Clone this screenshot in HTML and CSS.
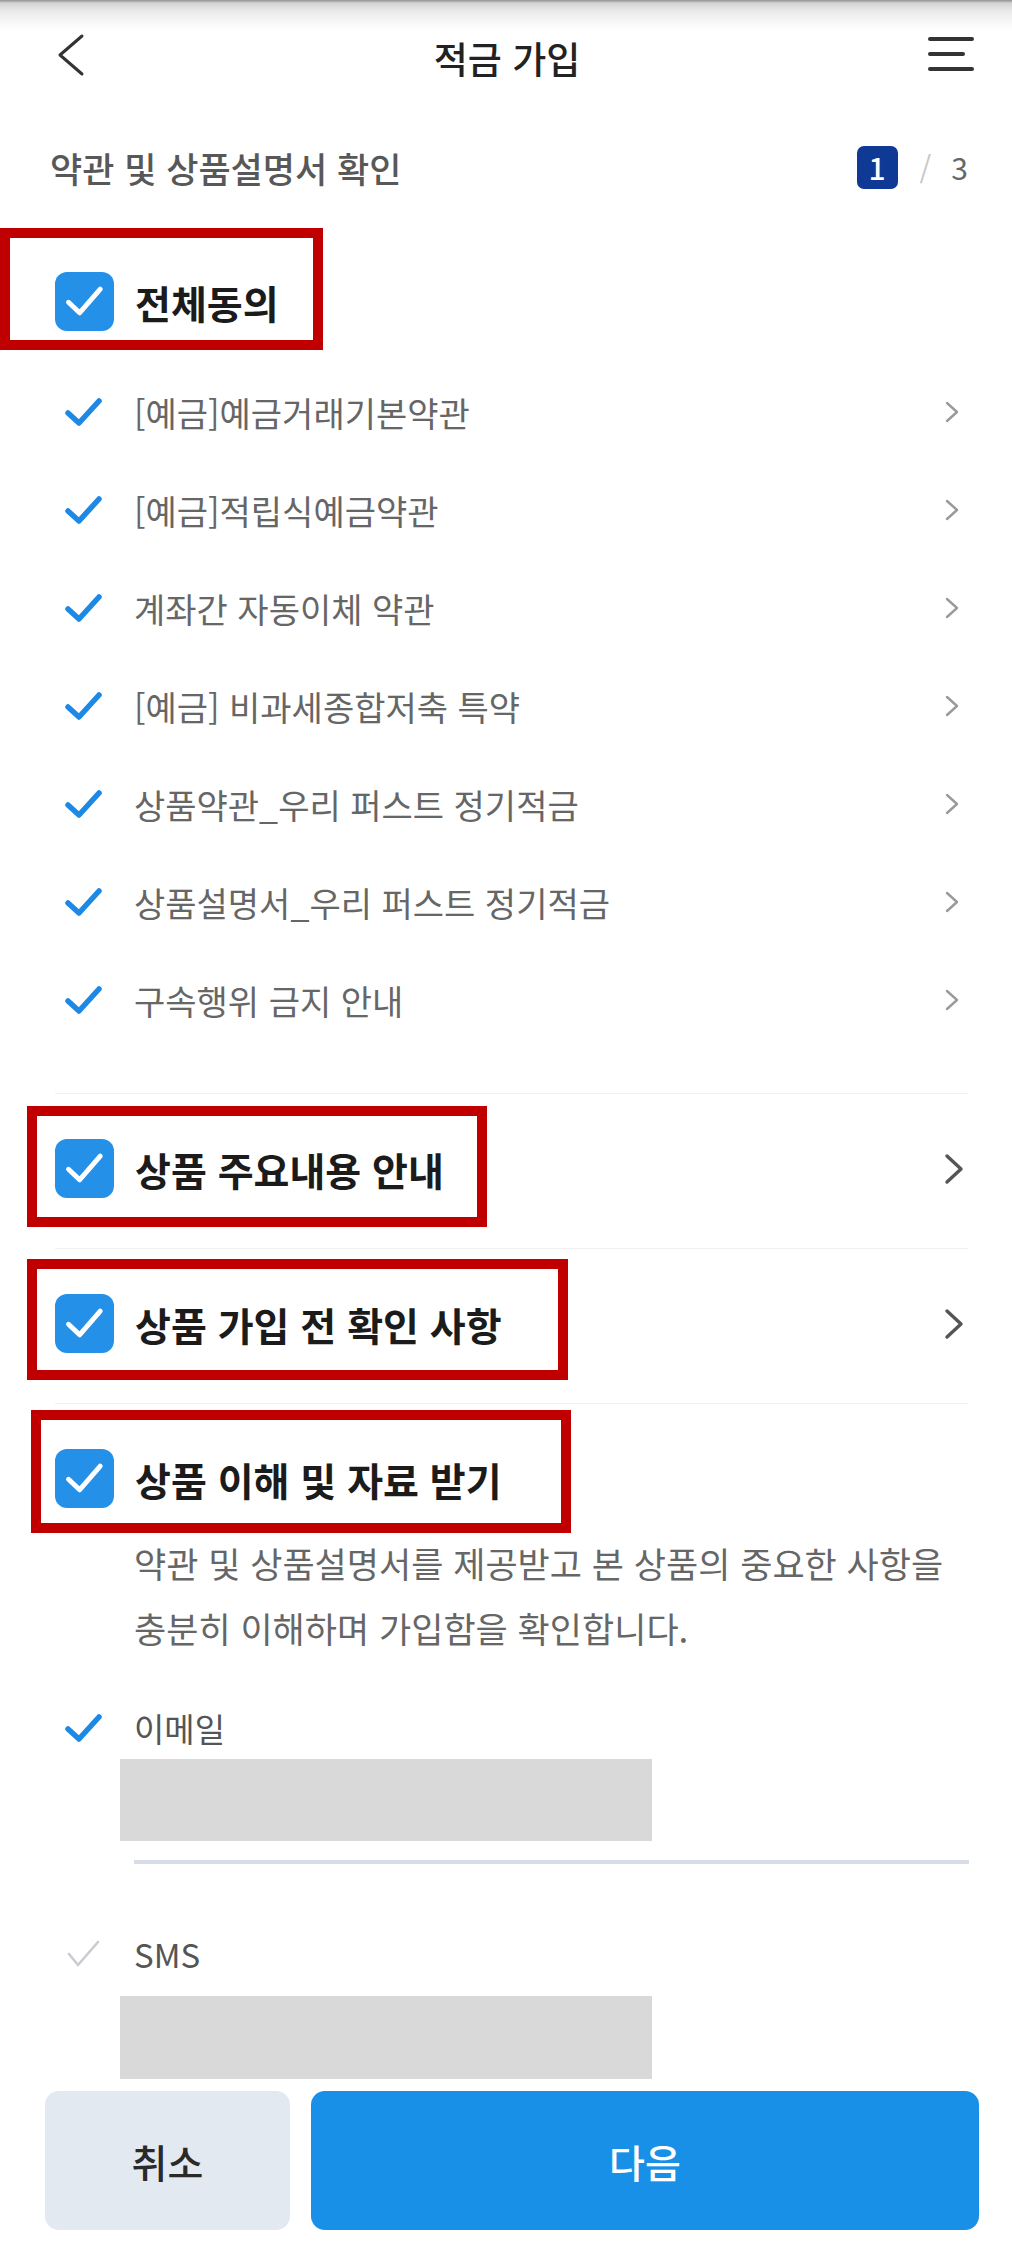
FILE: index.html
```html
<!DOCTYPE html>
<html lang="ko">
<head>
  <meta charset="UTF-8">
  <title>적금 가입</title>
  <meta name="viewport" content="width=device-width, initial-scale=1.0">
  <link rel="stylesheet" href="styles.css">
</head>
<body>
  <div class="top-shade"></div>

  <!-- Header -->
  <header class="app-header">
    <button class="icon-btn back-btn" type="button" title="뒤로">
      <svg viewBox="0 0 30 44" width="30" height="44"><polyline points="26,3 4,22 26,41" fill="none" stroke="#333" stroke-width="3" stroke-linecap="round" stroke-linejoin="round"/></svg>
    </button>
    <h1 class="app-title">적금 가입</h1>
    <button class="icon-btn menu-btn" type="button" title="메뉴">
      <svg viewBox="0 0 46 36" width="46" height="36"><g stroke="#333" stroke-width="4" stroke-linecap="round"><line x1="2" y1="3" x2="44" y2="3"/><line x1="2" y1="18" x2="35" y2="18"/><line x1="2" y1="33" x2="44" y2="33"/></g></svg>
    </button>
  </header>

  <main class="page">
    <div class="step-row">
      <h2 class="step-title">약관 및 상품설명서 확인</h2>
      <div class="step-count">
        <span class="step-now">1</span>
        <span class="step-sep">/</span>
        <span class="step-total">3</span>
      </div>
    </div>

    <!-- 전체동의 -->
    <div class="agree-all">
      <span class="mark-box"><svg viewBox="0 0 24 24"><polyline points="5.5,12.3 10,16.6 18.4,7" fill="none" stroke="#fff" stroke-width="2" stroke-linecap="round" stroke-linejoin="round"/></svg></span>
      <span class="agree-all-label">전체동의</span>
      <span class="callout callout-all"></span>
    </div>

    <ul class="terms">
      <li class="term">
        <svg class="tick" viewBox="0 0 37 30"><polyline points="3,16 14,26 34,4" fill="none" stroke="#1e88e5" stroke-width="5.5" stroke-linecap="round" stroke-linejoin="round"/></svg>
        <span class="term-name">[예금]예금거래기본약관</span>
        <svg class="chev-sm" viewBox="0 0 16 24"><polyline points="3,3 13,12 3,21" fill="none" stroke="#9a9a9a" stroke-width="2.4" stroke-linecap="round" stroke-linejoin="round"/></svg>
      </li>
      <li class="term">
        <svg class="tick" viewBox="0 0 37 30"><polyline points="3,16 14,26 34,4" fill="none" stroke="#1e88e5" stroke-width="5.5" stroke-linecap="round" stroke-linejoin="round"/></svg>
        <span class="term-name">[예금]적립식예금약관</span>
        <svg class="chev-sm" viewBox="0 0 16 24"><polyline points="3,3 13,12 3,21" fill="none" stroke="#9a9a9a" stroke-width="2.4" stroke-linecap="round" stroke-linejoin="round"/></svg>
      </li>
      <li class="term">
        <svg class="tick" viewBox="0 0 37 30"><polyline points="3,16 14,26 34,4" fill="none" stroke="#1e88e5" stroke-width="5.5" stroke-linecap="round" stroke-linejoin="round"/></svg>
        <span class="term-name">계좌간 자동이체 약관</span>
        <svg class="chev-sm" viewBox="0 0 16 24"><polyline points="3,3 13,12 3,21" fill="none" stroke="#9a9a9a" stroke-width="2.4" stroke-linecap="round" stroke-linejoin="round"/></svg>
      </li>
      <li class="term">
        <svg class="tick" viewBox="0 0 37 30"><polyline points="3,16 14,26 34,4" fill="none" stroke="#1e88e5" stroke-width="5.5" stroke-linecap="round" stroke-linejoin="round"/></svg>
        <span class="term-name">[예금] 비과세종합저축 특약</span>
        <svg class="chev-sm" viewBox="0 0 16 24"><polyline points="3,3 13,12 3,21" fill="none" stroke="#9a9a9a" stroke-width="2.4" stroke-linecap="round" stroke-linejoin="round"/></svg>
      </li>
      <li class="term">
        <svg class="tick" viewBox="0 0 37 30"><polyline points="3,16 14,26 34,4" fill="none" stroke="#1e88e5" stroke-width="5.5" stroke-linecap="round" stroke-linejoin="round"/></svg>
        <span class="term-name">상품약관_우리 퍼스트 정기적금</span>
        <svg class="chev-sm" viewBox="0 0 16 24"><polyline points="3,3 13,12 3,21" fill="none" stroke="#9a9a9a" stroke-width="2.4" stroke-linecap="round" stroke-linejoin="round"/></svg>
      </li>
      <li class="term">
        <svg class="tick" viewBox="0 0 37 30"><polyline points="3,16 14,26 34,4" fill="none" stroke="#1e88e5" stroke-width="5.5" stroke-linecap="round" stroke-linejoin="round"/></svg>
        <span class="term-name">상품설명서_우리 퍼스트 정기적금</span>
        <svg class="chev-sm" viewBox="0 0 16 24"><polyline points="3,3 13,12 3,21" fill="none" stroke="#9a9a9a" stroke-width="2.4" stroke-linecap="round" stroke-linejoin="round"/></svg>
      </li>
      <li class="term">
        <svg class="tick" viewBox="0 0 37 30"><polyline points="3,16 14,26 34,4" fill="none" stroke="#1e88e5" stroke-width="5.5" stroke-linecap="round" stroke-linejoin="round"/></svg>
        <span class="term-name">구속행위 금지 안내</span>
        <svg class="chev-sm" viewBox="0 0 16 24"><polyline points="3,3 13,12 3,21" fill="none" stroke="#9a9a9a" stroke-width="2.4" stroke-linecap="round" stroke-linejoin="round"/></svg>
      </li>
    </ul>

    <!-- 상품 확인 항목 -->
    <div class="agree-row">
      <span class="mark-box"><svg viewBox="0 0 24 24"><polyline points="5.5,12.3 10,16.6 18.4,7" fill="none" stroke="#fff" stroke-width="2" stroke-linecap="round" stroke-linejoin="round"/></svg></span>
      <span class="agree-label">상품 주요내용 안내</span>
      <svg class="chev-lg" viewBox="0 0 20 32"><polyline points="3,3 17,16 3,29" fill="none" stroke="#555" stroke-width="3.4" stroke-linecap="round" stroke-linejoin="round"/></svg>
      <span class="callout callout-main"></span>
    </div>
    <div class="agree-row">
      <span class="mark-box"><svg viewBox="0 0 24 24"><polyline points="5.5,12.3 10,16.6 18.4,7" fill="none" stroke="#fff" stroke-width="2" stroke-linecap="round" stroke-linejoin="round"/></svg></span>
      <span class="agree-label">상품 가입 전 확인 사항</span>
      <svg class="chev-lg" viewBox="0 0 20 32"><polyline points="3,3 17,16 3,29" fill="none" stroke="#555" stroke-width="3.4" stroke-linecap="round" stroke-linejoin="round"/></svg>
      <span class="callout callout-check"></span>
    </div>
    <div class="agree-row agree-open">
      <span class="mark-box"><svg viewBox="0 0 24 24"><polyline points="5.5,12.3 10,16.6 18.4,7" fill="none" stroke="#fff" stroke-width="2" stroke-linecap="round" stroke-linejoin="round"/></svg></span>
      <span class="agree-label">상품 이해 및 자료 받기</span>
      <span class="callout callout-data"></span>
    </div>
    <p class="agree-desc">약관 및 상품설명서를 제공받고 본 상품의 중요한 사항을<br>충분히 이해하며 가입함을 확인합니다.</p>

    <!-- 수령 방법 -->
    <div class="channel">
      <svg class="tick" viewBox="0 0 37 30"><polyline points="3,16 14,26 34,4" fill="none" stroke="#1e88e5" stroke-width="5.5" stroke-linecap="round" stroke-linejoin="round"/></svg>
      <span class="channel-name">이메일</span>
    </div>
    <div class="masked"></div>
    <div class="channel-line"></div>

    <div class="channel channel-off">
      <svg class="tick" viewBox="0 0 37 30"><polyline points="4,15 13,26 33,3" fill="none" stroke="#c9ccd2" stroke-width="2.6" stroke-linecap="round" stroke-linejoin="round"/></svg>
      <span class="channel-name">SMS</span>
    </div>
    <div class="masked"></div>
  </main>

  <!-- Bottom buttons -->
  <div class="bottom-bar">
    <button class="btn-cancel" type="button">취소</button>
    <button class="btn-next" type="button">다음</button>
  </div>
</body>
</html>
```

FILE: styles.css
```css
html, body {
  margin: 0;
  padding: 0;
}
body {
  width: 1012px;
  background: #fff;
  font-family: "Noto Sans CJK KR", "Noto Sans", sans-serif;
  color: #222;
}
.top-shade {
  height: 30px;
  background: linear-gradient(#8f8f8f 0, #d2d2d2 3px, #ececec 12px, #fff 30px);
}
/* Header */
.app-header {
  height: 56px;
  display: flex;
  align-items: center;
  justify-content: space-between;
  padding: 0 38px 0 56px;
}
.icon-btn {
  background: none;
  border: none;
  padding: 0;
  display: flex;
  cursor: pointer;
}
.back-btn { margin-top: -6px; }
.menu-btn { margin-top: -8px; }
.app-title {
  margin: 0;
  font-size: 37px;
  font-weight: 500;
  color: #222;
}
/* Content */
.page {
  padding: 0 44px 181px 55px;
}
.step-row {
  height: 44px;
  margin: 59px 0 0 -5px;
  display: flex;
  align-items: center;
  justify-content: space-between;
}
.step-title {
  margin: 0;
  font-size: 35px;
  font-weight: 500;
  color: #585858;
}
.step-count {
  display: flex;
  align-items: center;
  font-size: 30px;
}
.step-now {
  width: 41px;
  height: 43px;
  border-radius: 7px;
  background: #0e3a96;
  color: #fff;
  font-weight: 500;
  display: flex;
  align-items: center;
  justify-content: center;
}
.step-sep {
  color: #c9c9c9;
  margin: 0 20px 0 22px;
}
.step-total {
  color: #666;
}
.mark-box {
  width: 59px;
  height: 59px;
  border-radius: 12px;
  background: #2590e8;
  display: flex;
  flex-shrink: 0;
}
.mark-box svg {
  width: 59px;
  height: 59px;
}
.agree-all {
  position: relative;
  margin-top: 83px;
  display: flex;
  align-items: center;
  gap: 21px;
}
.agree-all-label,
.agree-label {
  font-size: 39px;
  font-weight: 700;
  color: #1b1b1b;
}
/* Red annotation boxes */
.callout {
  position: absolute;
  border: 10px solid #c00000;
  box-sizing: border-box;
  pointer-events: none;
}
.callout-all { left: -55px; top: -44px; width: 323px; height: 122px; }
.callout-main { left: -28px; top: 12px; width: 460px; height: 121px; }
.callout-check { left: -28px; top: 10px; width: 541px; height: 121px; }
.callout-data { left: -24px; top: 6px; width: 540px; height: 123px; }
/* Terms list */
.terms {
  list-style: none;
  margin: 32px 0 44px 0;
  padding: 0;
}
.term {
  height: 98px;
  display: flex;
  align-items: center;
  padding: 0 8px 0 10px;
}
.tick {
  width: 37px;
  height: 30px;
  flex-shrink: 0;
}
.term-name {
  flex: 1;
  margin-left: 32px;
  font-size: 34px;
  color: #666;
}
.chev-sm {
  width: 16px;
  height: 24px;
}
.agree-row {
  position: relative;
  border-top: 1px solid #f1f1f1;
  padding: 45px 0 50px 0;
  display: flex;
  align-items: center;
  gap: 21px;
}
.agree-row .agree-label {
  flex: 1;
}
.chev-lg {
  width: 20px;
  height: 32px;
  margin-right: 4px;
}
.agree-open {
  padding-bottom: 22px;
}
.agree-desc {
  margin: 0;
  padding-left: 79px;
  font-size: 35px;
  line-height: 65px;
  color: #666;
}
/* Receive channel */
.channel {
  height: 50px;
  margin-top: 43px;
  display: flex;
  align-items: center;
  padding-left: 10px;
}
.channel-name {
  margin-left: 32px;
  font-size: 33px;
  color: #555;
}
.channel-off {
  margin-top: 65px;
}
.masked {
  width: 532px;
  height: 82px;
  margin: 6px 0 0 65px;
  background: #d9d9d9;
}
.channel-off + .masked {
  margin-top: 17px;
  height: 83px;
}
.channel-line {
  height: 4px;
  margin: 19px -1px 0 79px;
  background: #d6dde6;
}
/* Bottom bar */
.bottom-bar {
  position: fixed;
  left: 0;
  right: 0;
  bottom: 0;
  background: #fff;
  padding: 10px 33px 32px 45px;
  display: flex;
  gap: 21px;
}
.btn-cancel,
.btn-next {
  height: 139px;
  border: none;
  border-radius: 14px;
  font-family: inherit;
  font-size: 39px;
  font-weight: 500;
  cursor: pointer;
}
.btn-cancel {
  width: 245px;
  background: #e3e9f1;
  color: #2a2a2a;
}
.btn-next {
  flex: 1;
  background: #1890e8;
  color: #fff;
}
```
